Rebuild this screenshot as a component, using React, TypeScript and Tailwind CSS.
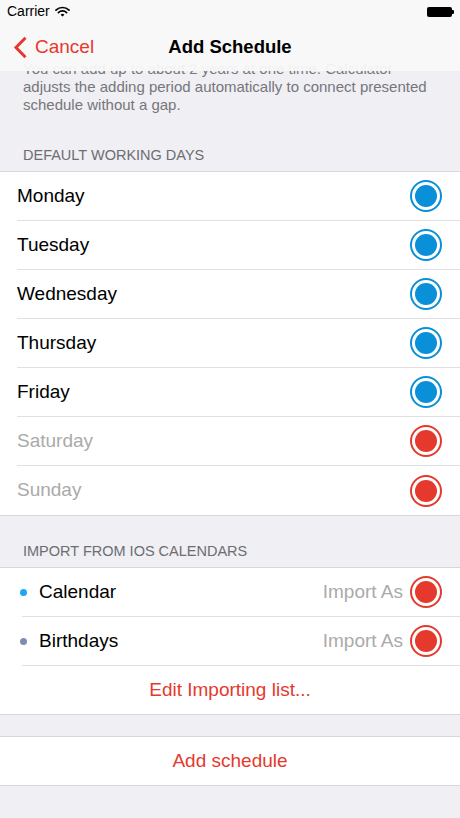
const days = [
  { name: "Monday", on: true },
  { name: "Tuesday", on: true },
  { name: "Wednesday", on: true },
  { name: "Thursday", on: true },
  { name: "Friday", on: true },
  { name: "Saturday", on: false },
  { name: "Sunday", on: false },
];

const calendars = [
  { name: "Calendar", dot: "bg-[#1ea7f0]" },
  { name: "Birthdays", dot: "bg-[#7d8fb0]" },
];

function Radio({ on }: { on: boolean }) {
  return (
    <div
      className={`w-[32px] h-[32px] rounded-full border-2 flex items-center justify-center ${
        on ? "border-[#0a90d8]" : "border-[#e5392d]"
      }`}
    >
      <div className={`w-[22px] h-[22px] rounded-full ${on ? "bg-[#0a90d8]" : "bg-[#e5392d]"}`} />
    </div>
  );
}

function Row({ children, last }: { children: React.ReactNode; last?: boolean }) {
  return (
    <div className="pl-[22px]">
      <div className={`h-[49px] flex items-center pr-[18px] ${last ? "" : "border-b border-[#e0e0e4]"}`}>
        {children}
      </div>
    </div>
  );
}

export default function App() {
  return (
    <div
      className="relative w-[460px] h-[818px] overflow-hidden bg-[#efeff4] text-black"
      style={{ fontFamily: '"Liberation Sans", Arial, sans-serif' }}
    >
      {/* Translucent header lies over the scrolled content */}
      <header className="absolute top-0 left-0 right-0 z-10 h-[71px] bg-[#f8f8f8]/95">
        <div className="h-[23px] px-[7px] flex items-center justify-between text-[14px]">
          <div className="flex items-center gap-[5px]">
            <span>Carrier</span>
            <svg width="15" height="11" viewBox="0 0 15 11">
              <path d="M1 4.2a9.2 9.2 0 0 1 13 0" stroke="#000" strokeWidth="1.7" fill="none" strokeLinecap="round" />
              <path d="M3.4 6.6a5.8 5.8 0 0 1 8.2 0" stroke="#000" strokeWidth="1.7" fill="none" strokeLinecap="round" />
              <path d="M5.6 8.8 7.5 10.6 9.4 8.8a2.7 2.7 0 0 0-3.8 0z" fill="#000" />
            </svg>
          </div>
          <div className="flex items-center mr-[-1px]">
            <div className="w-[25px] h-[10px] bg-black rounded-[2px]" />
            <div className="w-[2px] h-[4px] bg-black rounded-r-[1px]" />
          </div>
        </div>
        <div className="relative h-[48px] flex items-center">
          <div className="flex items-center text-[#e5392d] pl-[13px]">
            <svg width="15" height="23" viewBox="0 0 15 23" className="mr-[7px]">
              <path d="M12.5 1.8 3 11.5l9.5 9.7" stroke="#e5392d" strokeWidth="3" fill="none" />
            </svg>
            <span className="text-[19px]">Cancel</span>
          </div>
          <div className="absolute left-0 right-0 text-center text-[18.5px] font-bold pointer-events-none">
            Add Schedule
          </div>
        </div>
      </header>

      <main className="pt-[60px]">
        <p className="px-[23px] text-[15px] leading-[18px] text-[#76767b]">
          You can add up to about 2 years at one time. Calculator adjusts the adding period automatically to connect
          presented schedule without a gap.
        </p>

        <div className="px-[23px] pt-[32px] pb-[7px] text-[14.5px] leading-[18px] text-[#6d6d72]">
          DEFAULT WORKING DAYS
        </div>
        <section className="bg-white border-y border-[#d8d8dc]">
          {days.map((d, i) => (
            <div key={d.name} className="pl-[17px]">
              <div
                className={`h-[49px] flex items-center justify-between pr-[18px] ${
                  i === days.length - 1 ? "h-[48px]" : "border-b border-[#e0e0e4]"
                }`}
              >
                <span className={`text-[19px] ${d.on ? "text-black" : "text-[#aaaaaa]"}`}>{d.name}</span>
                <Radio on={d.on} />
              </div>
            </div>
          ))}
        </section>

        <div className="px-[23px] pt-[26px] pb-[7px] text-[14.5px] leading-[18px] text-[#6d6d72]">
          IMPORT FROM IOS CALENDARS
        </div>
        <section className="bg-white border-y border-[#d8d8dc]">
          {calendars.map((c) => (
            <div key={c.name} className="relative">
              <span className={`absolute left-[20px] top-[21px] w-[7px] h-[7px] rounded-full ${c.dot}`} />
              <Row>
                <span className="ml-[17px] text-[19px] flex-1">{c.name}</span>
                <span className="text-[19px] text-[#aaaaaa] mr-[7px]">Import As</span>
                <Radio on={false} />
              </Row>
            </div>
          ))}
          <div className="h-[48px] flex items-center justify-center text-[19px] text-[#e5392d]">
            Edit Importing list...
          </div>
        </section>

        <section className="mt-[21px] bg-white border-y border-[#d8d8dc]">
          <div className="h-[48px] flex items-center justify-center text-[19px] text-[#e5392d]">Add schedule</div>
        </section>
      </main>
    </div>
  );
}
